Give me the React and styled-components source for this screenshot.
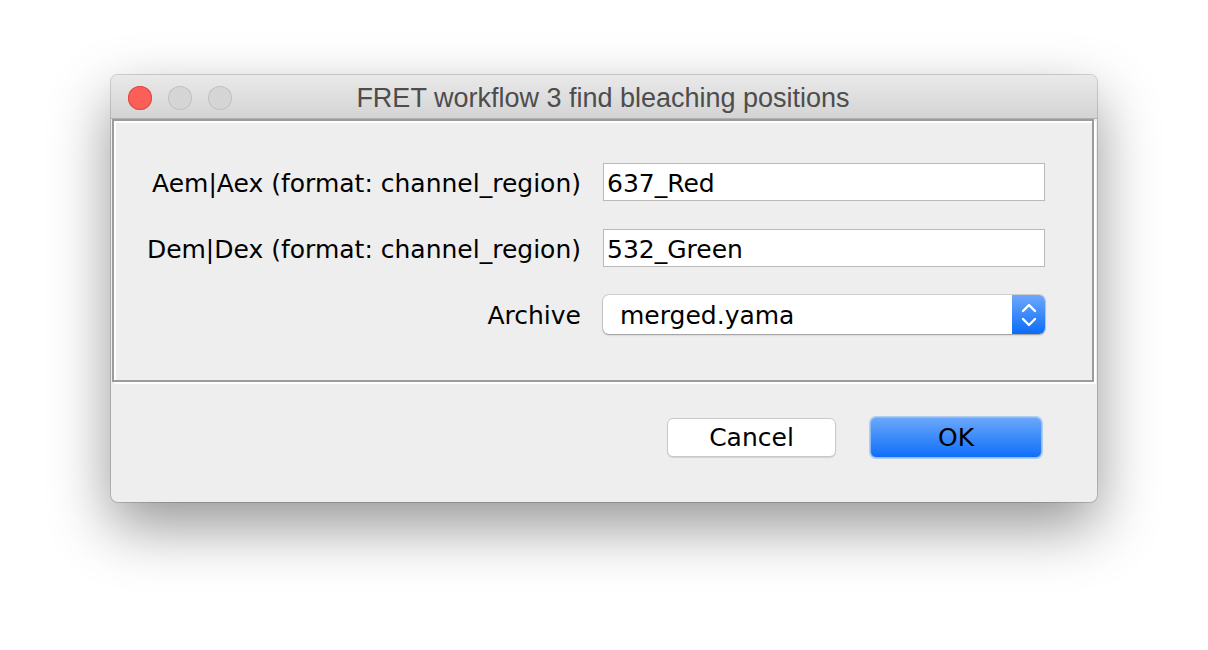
import styled, { createGlobalStyle } from "styled-components";

const GlobalStyle = createGlobalStyle`
    html, body {
        margin: 0;
        padding: 0;
        background: #ffffff;
    }
`;

const labelFont = `"DejaVu Sans", "Lucida Grande", Verdana, sans-serif`;

function App() {
    const fields = [
        { label: "Aem|Aex (format: channel_region)", value: "637_Red" },
        { label: "Dem|Dex (format: channel_region)", value: "532_Green" },
    ];

    return (
        <Page>
            <GlobalStyle />
            <Window>
                <TitleBar>
                    <Lights>
                        <Light $color="#fc5f57" $border="#df4943" />
                        <Light $color="#d5d5d5" $border="#c1c1c1" />
                        <Light $color="#d5d5d5" $border="#c1c1c1" />
                    </Lights>
                    <Title>FRET workflow 3 find bleaching positions</Title>
                    <span />
                </TitleBar>

                <Panel>
                    {fields.map((f) => (
                        <Row key={f.label}>
                            <Label>{f.label}</Label>
                            <TextInput type="text" defaultValue={f.value} />
                        </Row>
                    ))}
                    <Row>
                        <Label>Archive</Label>
                        <Select>
                            <SelectText>merged.yama</SelectText>
                            <Stepper>
                                <svg width="16" height="26" viewBox="0 0 16 26">
                                    <path d="M2 9 L8 3 L14 9" fill="none" stroke="#fff" strokeWidth="2.4" strokeLinecap="round" strokeLinejoin="round" />
                                    <path d="M2 17 L8 23 L14 17" fill="none" stroke="#fff" strokeWidth="2.4" strokeLinecap="round" strokeLinejoin="round" />
                                </svg>
                            </Stepper>
                        </Select>
                    </Row>
                </Panel>

                <Footer>
                    <Button>Cancel</Button>
                    <Button $primary>OK</Button>
                </Footer>
            </Window>
        </Page>
    );
}

const Page = styled.div`
    width: 1208px;
    height: 650px;
    padding: 75px 0 0 111px;
    box-sizing: border-box;
`;

const Window = styled.div`
    width: 986px;
    height: 427px;
    background: #eeeeee;
    border-radius: 7px;
    overflow: hidden;
    display: flex;
    flex-direction: column;
    box-shadow: 0 24px 60px rgba(0, 0, 0, 0.42), 0 0 0 1px rgba(0, 0, 0, 0.16);
`;

const TitleBar = styled.div`
    height: 44px;
    display: grid;
    grid-template-columns: 1fr auto 1fr;
    align-items: center;
    padding: 2px 17px 0;
    background: linear-gradient(#e9e9e9, #d4d4d4);
    border-bottom: 1px solid #b1b1b1;
    box-sizing: border-box;
`;

const Lights = styled.div`
    display: flex;
    gap: 16px;
`;

const Light = styled.div`
    width: 24px;
    height: 24px;
    border-radius: 50%;
    background: ${(p) => p.$color};
    box-shadow: inset 0 0 0 1px ${(p) => p.$border};
`;

const Title = styled.div`
    font-family: "Liberation Sans", Arial, sans-serif;
    font-size: 27px;
    color: #4d4d4d;
    white-space: nowrap;
    margin: 2px 0 0 -2px;
`;

const Panel = styled.div`
    margin: 0 3px 0 1px;
    height: 263px;
    box-sizing: border-box;
    border: 2px solid #9b9b9b;
    box-shadow: inset 2px 2px 0 #ffffff, 2px 2px 0 #ffffff;
    padding: 42px 0 0 30px;
    display: flex;
    flex-direction: column;
    gap: 28px;
`;

const Row = styled.div`
    display: grid;
    grid-template-columns: 437px 442px;
    column-gap: 22px;
    align-items: center;
`;

const Label = styled.div`
    font-family: ${labelFont};
    font-size: 25px;
    color: #000;
    text-align: right;
    white-space: nowrap;
    padding-top: 2px;
`;

const TextInput = styled.input`
    height: 38px;
    box-sizing: border-box;
    border: 1px solid #bababa;
    background: #fff;
    padding: 2px 3px 0;
    font-family: ${labelFont};
    font-size: 25px;
    color: #000;
    outline: none;
`;

const Select = styled.div`
    height: 39px;
    display: flex;
    border-radius: 6px;
    background: #fff;
    overflow: hidden;
    box-shadow: 0 0 0 1px rgba(0, 0, 0, 0.12), 0 1px 2px rgba(0, 0, 0, 0.28);
`;

const SelectText = styled.div`
    flex: 1;
    display: flex;
    align-items: center;
    padding: 2px 0 0 17px;
    font-family: ${labelFont};
    font-size: 25px;
    color: #000;
`;

const Stepper = styled.div`
    width: 33px;
    display: flex;
    align-items: center;
    justify-content: center;
    background: linear-gradient(#6ea8fb, #0b6cf9);
`;

const Footer = styled.div`
    flex: 1;
    display: flex;
    justify-content: flex-end;
    align-items: center;
    gap: 34px;
    padding: 0 55px 10px 0;
`;

const Button = styled.button`
    width: ${(p) => (p.$primary ? "172px" : "169px")};
    height: ${(p) => (p.$primary ? "41px" : "39px")};
    border-radius: 6px;
    font-family: ${labelFont};
    font-size: 25px;
    color: #000;
    padding: 0;
    border: ${(p) => (p.$primary ? "1px solid #8fbaf6" : "1px solid #c9c9c9")};
    background: ${(p) => (p.$primary ? "linear-gradient(#6aa7fb, #0f6ff9)" : "#ffffff")};
    box-shadow: ${(p) => (p.$primary ? "0 0 0 1px rgba(120, 170, 245, 0.5)" : "0 1px 1px rgba(0, 0, 0, 0.12)")};
`;

export default App;
